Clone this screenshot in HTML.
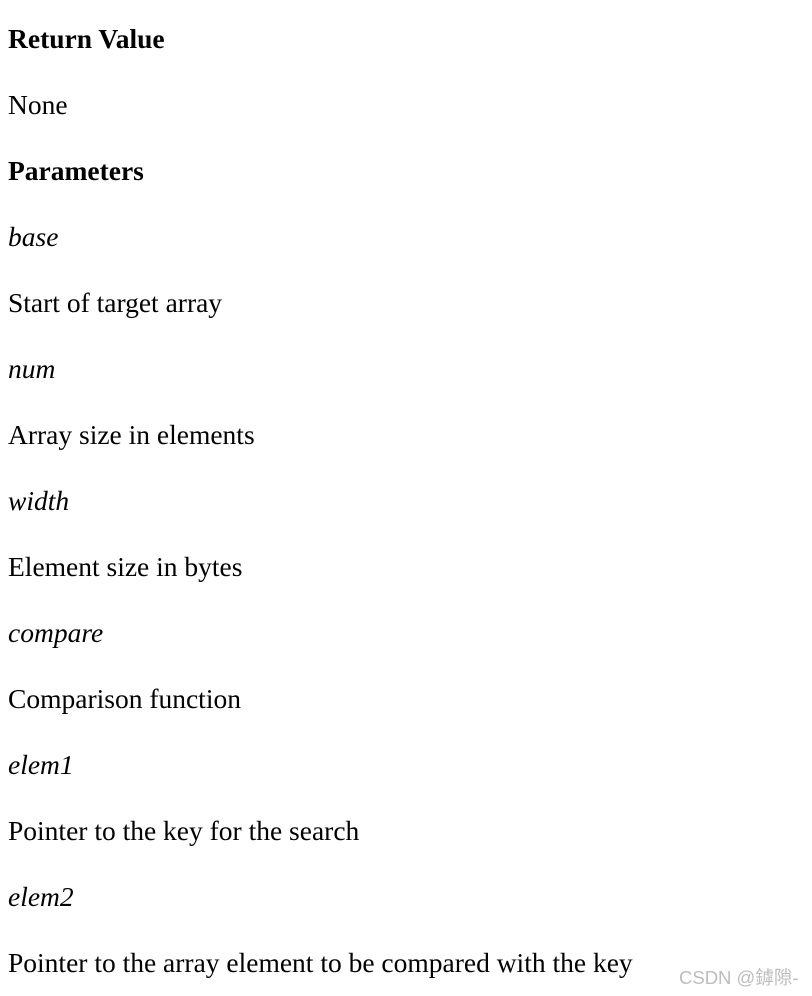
<!DOCTYPE html>
<html><head><meta charset="utf-8"><style>
html,body{margin:0;padding:0;background:#fff;width:812px;height:996px;overflow:hidden}
body{font-family:"Liberation Serif",serif;font-size:27.5px;color:#000;position:relative}
.c{position:absolute;left:8px;top:6px}
.c div{height:66px;line-height:66px;white-space:nowrap}
b{font-weight:bold}
.wm{position:absolute;left:679px;top:964px;font-family:"Liberation Sans","Noto Sans CJK SC",sans-serif;font-size:18.5px;color:#bdbdbd;white-space:nowrap}
</style></head><body>
<div class="c">
<div><b>Return Value</b></div>
<div>None</div>
<div><b>Parameters</b></div>
<div><i>base</i></div>
<div>Start of target array</div>
<div><i>num</i></div>
<div>Array size in elements</div>
<div><i>width</i></div>
<div>Element size in bytes</div>
<div><i>compare</i></div>
<div>Comparison function</div>
<div><i>elem1</i></div>
<div>Pointer to the key for the search</div>
<div><i>elem2</i></div>
<div>Pointer to the array element to be compared with the key</div>
</div>
<div class="wm">CSDN @鏬隙-</div>
</body></html>
